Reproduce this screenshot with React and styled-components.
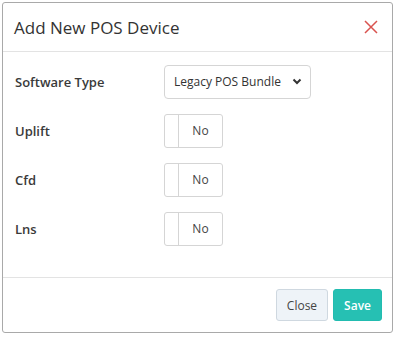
import styled, { createGlobalStyle } from "styled-components";

const GlobalStyle = createGlobalStyle`
  body {
    margin: 0;
    background: #fff;
    font-family: "Open Sans", "Liberation Sans", sans-serif;
    color: #333;
  }
`;

const Wrapper = styled.div`
  padding: 2px 3px 0 2px;
`;
const Modal = styled.div`
  display: flex;
  flex-direction: column;
  height: 331px;
  box-sizing: border-box;
  border: 1px solid #a9a9a9;
  border-radius: 3px;
  background: #fff;
`;
const Header = styled.div`
  display: flex;
  align-items: center;
  justify-content: space-between;
  height: 48px;
  padding: 0 14px 0 11px;
  border-bottom: 1px solid #e3e3e3;
`;
const Title = styled.h4`
  margin: 0;
  font-size: 17px;
  font-weight: 400;
  color: #333;
`;
const CloseX = styled.button`
  display: flex;
  padding: 0;
  border: none;
  background: none;
  cursor: pointer;
`;
const Body = styled.div`
  flex: 1;
  display: grid;
  grid-template-columns: 149px auto;
  grid-auto-rows: 49px;
  align-items: center;
  align-content: start;
  padding: 5px 11px 0 12px;
`;
const Label = styled.label`
  font-size: 13px;
  font-weight: 600;
  color: #3a3a3a;
`;
const Select = styled.div`
  display: flex;
  align-items: center;
  justify-content: space-between;
  width: 147px;
  height: 34px;
  box-sizing: border-box;
  padding: 0 8px 0 9px;
  border: 1px solid #d5d5d5;
  border-radius: 4px;
  font-size: 12px;
  color: #333;
`;
const Toggle = styled.div`
  display: flex;
  width: 59px;
  height: 34px;
  box-sizing: border-box;
  border: 1px solid #d5d5d5;
  border-radius: 3px;
`;
const Knob = styled.span`
  width: 13px;
  border-right: 1px solid #d5d5d5;
`;
const ToggleText = styled.span`
  flex: 1;
  display: flex;
  align-items: center;
  justify-content: center;
  font-size: 12px;
  color: #444;
`;
const Footer = styled.div`
  display: flex;
  justify-content: flex-end;
  align-items: center;
  gap: 5px;
  height: 54px;
  padding: 0 10px;
  border-top: 1px solid #e3e3e3;
`;
const Button = styled.button`
  height: 32px;
  padding: 0 10px;
  border: 1px solid ${(p) => (p.$primary ? "#22bcb0" : "#cfd8e0")};
  border-radius: 3px;
  background: ${(p) => (p.$primary ? "#26c0b3" : "#eef3f8")};
  color: ${(p) => (p.$primary ? "#fff" : "#444")};
  font-family: "Open Sans", "Liberation Sans", sans-serif;
  font-size: 12px;
  font-weight: ${(p) => (p.$primary ? 600 : 400)};
  cursor: pointer;
`;

const rows = ["Uplift", "Cfd", "Lns"];

function App() {
  return (
    <Wrapper>
      <GlobalStyle />
      <Modal>
        <Header>
          <Title>Add New POS Device</Title>
          <CloseX aria-label="close">
            <svg width="14" height="14" viewBox="0 0 14 14">
              <path d="M1 1L13 13M13 1L1 13" stroke="#d9534f" strokeWidth="1.5" />
            </svg>
          </CloseX>
        </Header>
        <Body>
          <Label>Software Type</Label>
          <Select>
            <span>Legacy POS Bundle</span>
            <svg width="10" height="7" viewBox="0 0 10 7">
              <path d="M1.5 1.5L5 5L8.5 1.5" fill="none" stroke="#333" strokeWidth="2" />
            </svg>
          </Select>
          {rows.map((r) => (
            <>
              <Label key={r}>{r}</Label>
              <Toggle key={r + "t"}>
                <Knob />
                <ToggleText>No</ToggleText>
              </Toggle>
            </>
          ))}
        </Body>
        <Footer>
          <Button>Close</Button>
          <Button $primary>Save</Button>
        </Footer>
      </Modal>
    </Wrapper>
  );
}

export default App;
